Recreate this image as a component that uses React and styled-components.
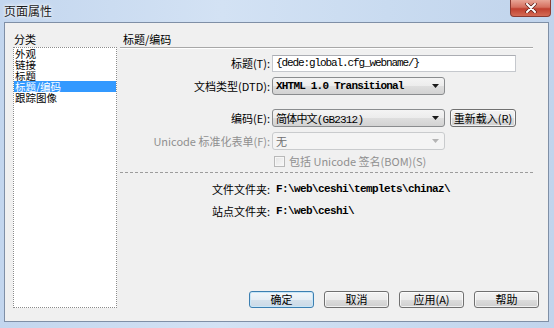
import React from "react";
import styled, { createGlobalStyle } from "styled-components";

const GlobalStyle = createGlobalStyle`
  body {
    margin: 0;
    font-family: "Noto Sans CJK SC", "Noto Sans", sans-serif;
    font-size: 11px;
    color: #000;
  }
`;

const categories = ["外观", "链接", "标题", "标题/编码", "跟踪图像"];

const Arrow = ({ disabled }) => (
  <svg width="7" height="4" viewBox="0 0 7 4">
    <polygon points="0,0 7,0 3.5,4" fill={disabled ? "#b4b4b4" : "#1a1a1a"} />
  </svg>
);

const PageProperties = () => {
  return (
    <Window>
      <TitleBar>
        <Title>页面属性</Title>
        <CloseButton>
          <svg width="12" height="10" viewBox="0 0 12 10">
            <path d="M2 1 L10 9 M10 1 L2 9" stroke="#5a1d17" strokeWidth="3.4" strokeLinecap="round" />
            <path d="M2 1 L10 9 M10 1 L2 9" stroke="#fff" strokeWidth="2" strokeLinecap="round" />
          </svg>
        </CloseButton>
      </TitleBar>

      <Client>
        <Sidebar>
          <PaneLabel>分类</PaneLabel>
          <List>
            {categories.map((c) => (
              <ListItem key={c} selected={c === "标题/编码"}>
                {c}
              </ListItem>
            ))}
          </List>
        </Sidebar>

        <Panel>
          <PanelTitle>标题/编码</PanelTitle>

          <Row top={6}>
            <Label>标题(T):</Label>
            <TextInput>{"{dede:global.cfg_webname/}"}</TextInput>
          </Row>
          <Row top={5}>
            <Label>文档类型(DTD):</Label>
            <Select>
              <SelectValue bold>XHTML 1.0 Transitional</SelectValue>
              <Arrow />
            </Select>
          </Row>
          <Row top={14}>
            <Label>编码(E):</Label>
            <Select>
              <SelectValue>简体中文(GB2312)</SelectValue>
              <Arrow />
            </Select>
            <ReloadButton>重新载入(R)</ReloadButton>
          </Row>
          <Row top={5}>
            <Label disabled>Unicode 标准化表单(F):</Label>
            <Select disabled>
              <SelectValue disabled>无</SelectValue>
              <Arrow disabled />
            </Select>
          </Row>
          <Row top={2}>
            <Label />
            <Checkbox />
            <CheckLabel>包括 Unicode 签名(BOM)(S)</CheckLabel>
          </Row>

          <Divider />

          <Row top={7}>
            <Label>文件文件夹:</Label>
            <Path>{"F:\\web\\ceshi\\templets\\chinaz\\"}</Path>
          </Row>
          <Row top={4}>
            <Label>站点文件夹:</Label>
            <Path>{"F:\\web\\ceshi\\"}</Path>
          </Row>

          <ButtonRow>
            <DialogButton primary>确定</DialogButton>
            <DialogButton>取消</DialogButton>
            <DialogButton>应用(A)</DialogButton>
            <DialogButton>帮助</DialogButton>
          </ButtonRow>
        </Panel>
      </Client>
    </Window>
  );
};

export default function App() {
  return (
    <>
      <GlobalStyle />
      <PageProperties />
    </>
  );
}

const Window = styled.div`
  width: 554px;
  height: 328px;
  display: flex;
  flex-direction: column;
  background: linear-gradient(90deg, #c3d6ee 0%, #d3e2f4 40%, #c9dbf0 70%, #c1d4ec 100%);
  overflow: hidden;
`;

const TitleBar = styled.div`
  height: 22px;
  display: flex;
  align-items: flex-start;
  padding-left: 4px;
  flex-shrink: 0;
`;

const Title = styled.div`
  font-size: 12px;
  line-height: 14px;
  margin-top: 4px;
  color: #1b1b1b;
  text-shadow: 0 0 5px #fff, 0 0 3px #fff;
`;

const CloseButton = styled.div`
  margin-left: auto;
  margin-right: 3px;
  width: 41px;
  height: 17px;
  box-sizing: border-box;
  border: 1px solid #8b3a31;
  border-top: none;
  border-radius: 0 0 4px 4px;
  background: linear-gradient(#e8a596 0%, #d5705f 45%, #c0402f 55%, #d46b55 100%);
  display: flex;
  align-items: center;
  justify-content: center;
`;

const Client = styled.div`
  flex: 1;
  margin: 0 5px 6px 4px;
  border: 1px solid #7f8fa6;
  background: #f0f0f0;
  display: flex;
  gap: 3px;
  padding: 9px 8px 13px 8px;
`;

const Sidebar = styled.div`
  width: 104px;
  display: flex;
  flex-direction: column;
`;

const PaneLabel = styled.div`
  line-height: 15px;
  height: 15px;
  padding-left: 1px;
`;

const List = styled.div`
  flex: 1;
  background: #fff;
  border: 1px dotted #8c8c8c;
`;

const ListItem = styled.div`
  height: 11px;
  line-height: 11px;
  font-size: 10.5px;
  padding-left: 1px;
  white-space: nowrap;
  background: ${(p) => (p.selected ? "#3399ff" : "transparent")};
  color: ${(p) => (p.selected ? "#fff" : "#000")};
`;

const Panel = styled.div`
  flex: 1;
  display: flex;
  flex-direction: column;
`;

const PanelTitle = styled.div`
  line-height: 15px;
  height: 15px;
  padding-left: 3px;
  margin-right: 7px;
  border-bottom: 1px solid #a8a8a8;
  box-shadow: 0 1px 0 #fff;
`;

const Row = styled.div`
  display: flex;
  align-items: center;
  height: 18px;
  margin-top: ${(p) => p.top}px;
`;

const Label = styled.div`
  width: 150px;
  flex-shrink: 0;
  text-align: right;
  white-space: nowrap;
  margin-right: 2px;
  color: ${(p) => (p.disabled ? "#8f8f8f" : "#000")};
`;

const TextInput = styled.div`
  width: 244px;
  height: 17px;
  box-sizing: border-box;
  border: 1px solid #c5c8cd;
  border-top-color: #abadb3;
  background: #fff;
  padding-left: 3px;
  font-family: "Liberation Mono", monospace;
  font-size: 11px;
  letter-spacing: -1.1px;
  line-height: 15px;
  white-space: nowrap;
`;

const Select = styled.div`
  width: 173px;
  height: 18px;
  box-sizing: border-box;
  border: 1px solid ${(p) => (p.disabled ? "#c9cbcd" : "#8a8c8e")};
  border-radius: 3px;
  background: ${(p) =>
    p.disabled
      ? "#f4f4f4"
      : "linear-gradient(#f4f4f4 0%, #ececec 50%, #dedede 51%, #d2d2d2 100%)"};
  display: flex;
  align-items: center;
  justify-content: space-between;
  padding: 0 5px 0 3px;
`;

const SelectValue = styled.span`
  font-family: "Liberation Mono", "Noto Sans CJK SC", monospace;
  font-size: 11px;
  letter-spacing: -0.8px;
  font-weight: ${(p) => (p.bold ? "bold" : "normal")};
  white-space: nowrap;
  color: ${(p) => (p.disabled ? "#6f6f6f" : "#000")};
`;

const ButtonBase = styled.div`
  height: 17px;
  box-sizing: border-box;
  border: 1px solid #707070;
  border-radius: 3px;
  background: linear-gradient(#f3f3f3 0%, #ebebeb 50%, #dddddd 51%, #cfcfcf 100%);
  box-shadow: inset 0 0 0 1px rgba(255, 255, 255, 0.7);
  display: flex;
  align-items: center;
  justify-content: center;
  line-height: 15px;
  white-space: nowrap;
`;

const ReloadButton = styled(ButtonBase)`
  width: 66px;
  height: 18px;
  margin-left: 5px;
`;

const Checkbox = styled.div`
  width: 11px;
  height: 11px;
  box-sizing: border-box;
  margin-left: 2px;
  border: 1px solid #b8b8b8;
  background: linear-gradient(135deg, #e4e4e4, #f8f8f8);
  box-shadow: inset 0 0 0 1px #f6f6f6;
`;

const CheckLabel = styled.div`
  margin-left: 4px;
  color: #8f8f8f;
  white-space: nowrap;
`;

const Divider = styled.div`
  margin-top: 2px;
  margin-right: 7px;
  border-top: 1px dashed #9c9c9c;
`;

const Path = styled.div`
  margin-left: 4px;
  font-family: "Liberation Mono", monospace;
  font-size: 11px;
  letter-spacing: -0.6px;
  font-weight: bold;
  white-space: nowrap;
`;

const ButtonRow = styled.div`
  margin-top: auto;
  display: flex;
  justify-content: flex-end;
  gap: 10px;
  padding-right: 1px;
`;

const DialogButton = styled(ButtonBase)`
  width: 65px;
  border-color: ${(p) => (p.primary ? "#3c7fb1" : "#707070")};
  box-shadow: ${(p) =>
    p.primary ? "inset 0 0 0 1px #c8e6f7" : "inset 0 0 0 1px rgba(255,255,255,0.7)"};
  background: ${(p) =>
    p.primary
      ? "linear-gradient(#f1f6fa 0%, #e6eef5 50%, #d6e2ec 51%, #cbd9e6 100%)"
      : "linear-gradient(#f3f3f3 0%, #ebebeb 50%, #dddddd 51%, #cfcfcf 100%)"};
`;
